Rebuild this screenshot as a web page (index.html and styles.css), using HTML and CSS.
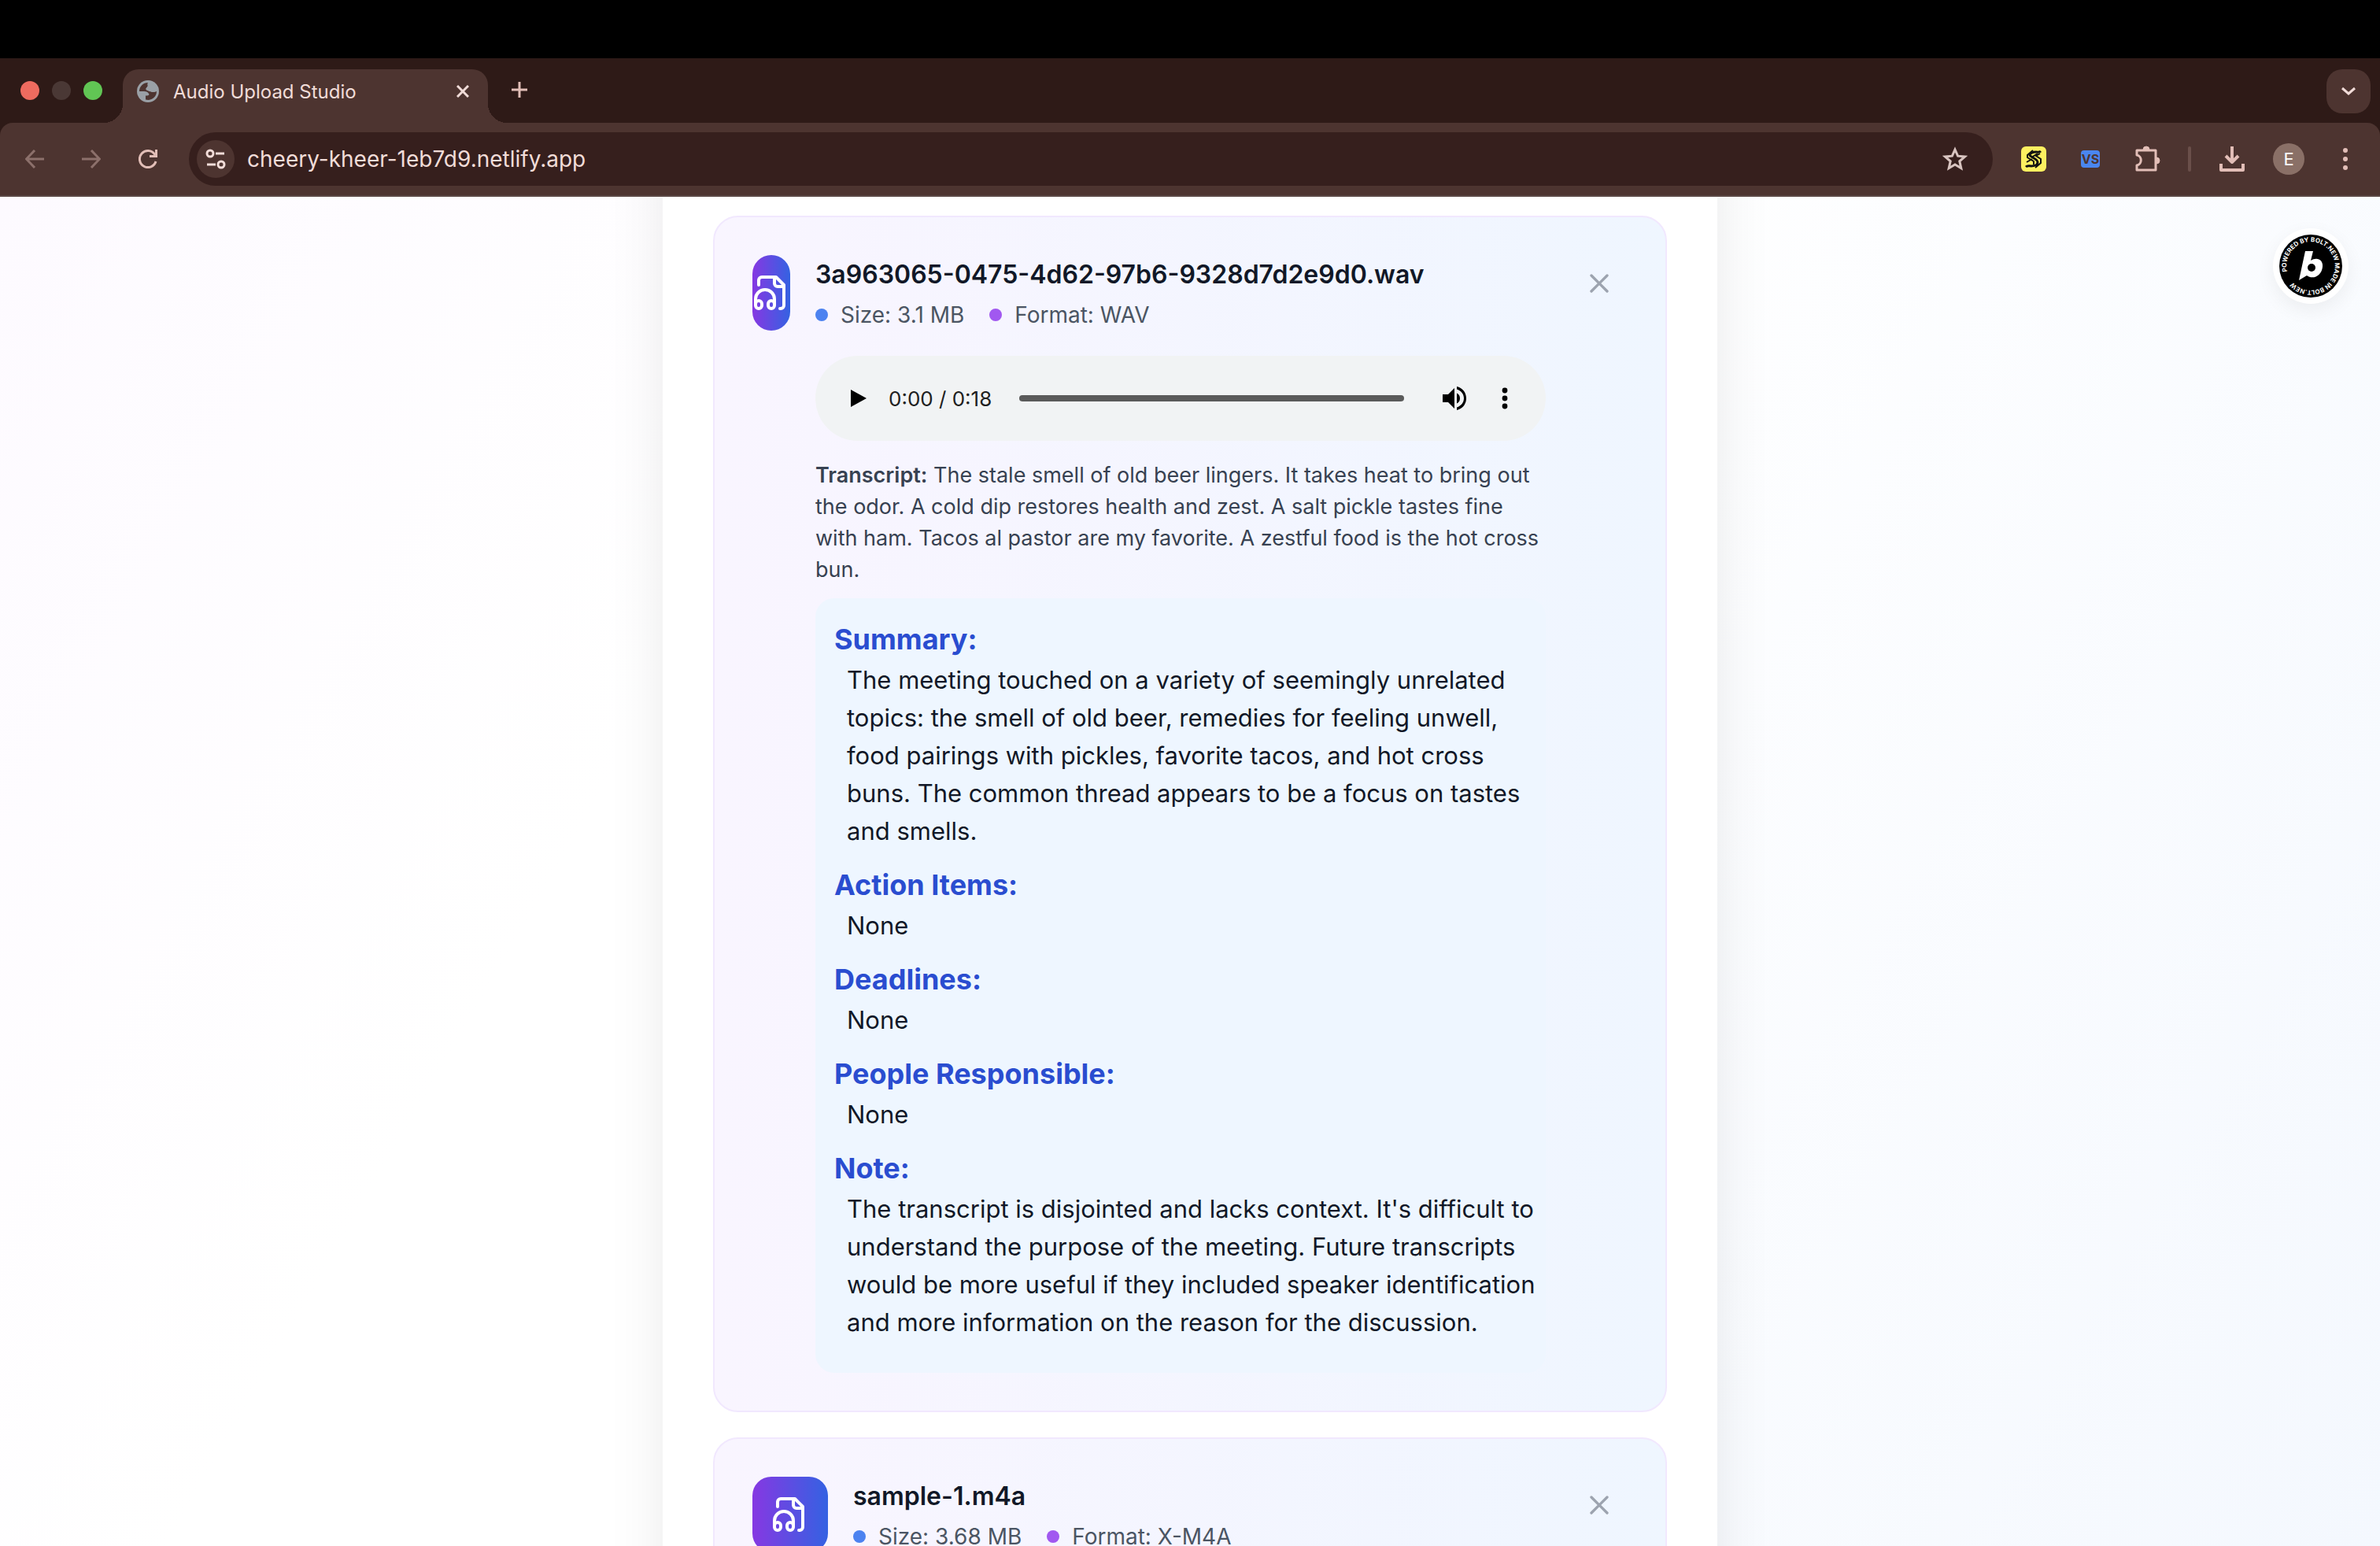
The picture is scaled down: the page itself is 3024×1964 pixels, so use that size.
FILE: index.html
```html
<!DOCTYPE html>
<html lang="en">
<head>
  <meta charset="UTF-8" />
  <meta name="viewport" content="width=device-width, initial-scale=1" />
  <title>Audio Upload Studio</title>
  <link rel="stylesheet" href="styles.css">
</head>
<body>

  <div class="menu-bar"></div>

  <header class="browser">
    <div class="tab-strip">
      <div class="lights">
        <span class="light red"></span>
        <span class="light grey"></span>
        <span class="light green"></span>
      </div>
      <div class="tab">
        <svg class="favicon" viewBox="0 0 28 28"><circle cx="14" cy="14" r="14" fill="#9aa0a6"/><path d="M14 3A11 11 0 0 0 3 14h6c3 0 5 1 6 3 1 1.500 0 2.500-2 2.500h-2V24.600A11 11 0 0 0 25 14c-2 1-4 1.500-5.500.5-1.500-1-3.500.5-5-1-1.500-1.200-3-.5-3-2.500 0-1.500 1.500-2 2-3.500S12.500 5 14 3z" fill="#4d3430"/><path d="M14.500 3.500c-1.500 2 .5 2.500-.5 4s-2.500 2-2.500 3.500 1.500 1.500 3 1.500c2.500 0 2.500 2.500 5 2.500 2 0 4-1 5.500-2L22 6z" fill="#9aa0a6"/></svg>
        <span class="tab-title">Audio Upload Studio</span>
        <button class="icon-button tab-close" aria-label="Close tab"><svg viewBox="0 0 16 16" width="16" height="16"><path d="M1 1l14 14M15 1L1 15" stroke="#f1dcd8" stroke-width="3" fill="none"/></svg></button>
      </div>
      <button class="icon-button new-tab" aria-label="New tab"><svg viewBox="0 0 20 20" width="20" height="20"><path d="M10 0v20M0 10h20" stroke="#e2beb7" stroke-width="3"/></svg></button>
      <button class="icon-button tab-search" aria-label="Search tabs"><svg viewBox="0 0 18 12" width="18" height="12"><path d="M1 2l8 7 8-7" stroke="#f1dcd8" stroke-width="3" fill="none"/></svg></button>
    </div>

    <div class="toolbar">
      <button class="icon-button nav" aria-label="Back"><svg viewBox="0 0 24 24" width="24" height="24"><path d="M24 12H2M12 1L1.500 12 12 23" stroke="#8c706b" stroke-width="3" fill="none"/></svg></button>
      <button class="icon-button nav" aria-label="Forward"><svg viewBox="0 0 24 24" width="24" height="24"><path d="M0 12h22M12 1l10.500 11L12 23" stroke="#8c706b" stroke-width="3" fill="none"/></svg></button>
      <button class="icon-button nav" aria-label="Reload"><svg viewBox="0 0 24 24" width="24" height="24"><path d="M22 15a10.500 10.500 0 1 1-1.500-9L23 9" stroke="#e2beb7" stroke-width="3" fill="none"/><path d="M24 0v10H14V7h7V0z" fill="#e2beb7"/></svg></button>
      <div class="omnibox">
        <button class="icon-button site-info" aria-label="View site information"><svg viewBox="0 0 26 26" width="26" height="26" fill="none" stroke="#f1dcd8" stroke-width="3"><circle cx="6" cy="6" r="4"/><path d="M13 6h11M2 20h11"/><circle cx="20" cy="20" r="4"/></svg></button>
        <input class="address" type="text" value="cheery-kheer-1eb7d9.netlify.app" aria-label="Address" />
        <button class="icon-button" aria-label="Bookmark this tab"><svg viewBox="0 0 32 32" width="32" height="32"><path d="M16 4l3.600 8.200 8.900.8-6.700 5.900 2 8.800L16 23l-7.800 4.700 2-8.800-6.700-5.900 8.900-.8z" fill="none" stroke="#d8c4c0" stroke-width="3"/></svg></button>
      </div>
      <div class="extensions">
        <button class="icon-button slot" aria-label="Scribe"><svg viewBox="0 0 32 32" width="32" height="32"><rect width="32" height="32" rx="6" fill="#fdf060"/><path d="M25 6c-2 2-4 1-6 1-4 0-8 2-8 4s10 5 10 9-5 5-8 5-5-1-7 1" fill="none" stroke="#111" stroke-width="3"/><path d="M15 5l-7 6v3l8 5v4M24 9l-5 3 6 4v5l-7 6" fill="none" stroke="#111" stroke-width="2"/><path d="M7 20l7-4M13 14l8-5" stroke="#111" stroke-width="2"/></svg></button>
        <button class="icon-button slot" aria-label="VS"><span class="vs">VS</span></button>
        <button class="icon-button slot" aria-label="Extensions"><svg viewBox="0 0 34 34" width="34" height="34"><path d="M4 6h24v25H4v-6c7-1 7-12 0-13z" fill="none" stroke="#e2beb7" stroke-width="3" stroke-linejoin="round"/><path d="M12 5a4 4 0 0 1 8 0zM29 15a4 4 0 0 1 0 8z" fill="#e2beb7" stroke="#e2beb7"/></svg></button>
      </div>
      <span class="divider"></span>
      <button class="icon-button download" aria-label="Downloads"><svg viewBox="0 0 32 32" width="32" height="32"><path d="M16 0v20M8 12l8 8 8-8M2 22v8h28v-8" fill="none" stroke="#e2beb7" stroke-width="4" stroke-linejoin="round"/></svg></button>
      <button class="icon-button avatar" aria-label="Profile">E</button>
      <button class="icon-button kebab" aria-label="Menu"><svg viewBox="0 0 6 28" width="6" height="28" fill="#e2beb7"><circle cx="3" cy="3" r="3"/><circle cx="3" cy="14" r="3"/><circle cx="3" cy="25" r="3"/></svg></button>
    </div>
  </header>

  <main class="page">
    <section class="panel">

      <article class="card">
        <div class="file-icon narrow">
          <svg viewBox="0 0 24 24" width="48" height="48"><path d="M17.500 22h.5a2 2 0 0 0 2-2V7l-5-5H6a2 2 0 0 0-2 2v3"/><path d="M14 2v4a2 2 0 0 0 2 2h4"/><path d="M2 19a2 2 0 1 1 4 0v1a2 2 0 1 1-4 0v-4a6 6 0 0 1 12 0v4a2 2 0 1 1-4 0v-1a2 2 0 1 1 4 0"/></svg>
        </div>
        <div class="file-body">
          <h3 class="file-name">3a963065-0475-4d62-97b6-9328d7d2e9d0.wav</h3>
          <div class="meta">
            <span class="dot blue"></span><span class="meta-text">Size: 3.1 MB</span>
            <span class="dot purple"></span><span class="meta-text">Format: WAV</span>
          </div>
          <div class="player">
            <button class="icon-button play" aria-label="Play"><svg viewBox="0 0 20 22" width="20" height="22"><path d="M0 0l20 11L0 22z"/></svg></button>
            <span class="time">0:00 / 0:18</span>
            <input class="seek" type="range" min="0" max="18" value="0" aria-label="Seek" />
            <button class="icon-button volume" aria-label="Mute"><svg viewBox="0 0 30 30" width="30" height="30"><path d="M0 10v10h7l8 8V2l-8 8zM18 8.500v13c2.500-1 4-3.500 4-6.500s-1.500-5.500-4-6.500z"/><path d="M18 0v3.500c5 1.500 9 6 9 11.500s-4 10-9 11.500V30c7-1.500 12-7.500 12-15S25 1.500 18 0z"/></svg></button>
            <button class="icon-button more" aria-label="More options"><svg viewBox="0 0 8 28" width="8" height="28"><circle cx="4" cy="4" r="3.400"/><circle cx="4" cy="14" r="3.400"/><circle cx="4" cy="24" r="3.400"/></svg></button>
          </div>
          <p class="transcript"><strong>Transcript:</strong> The stale smell of old beer lingers. It takes heat to bring out<br>the odor. A cold dip restores health and zest. A salt pickle tastes fine<br>with ham. Tacos al pastor are my favorite. A zestful food is the hot cross<br>bun.</p>
          <div class="notes">
            <h4>Summary:</h4>
            <p>The meeting touched on a variety of seemingly unrelated<br>topics: the smell of old beer, remedies for feeling unwell,<br>food pairings with pickles, favorite tacos, and hot cross<br>buns. The common thread appears to be a focus on tastes<br>and smells.</p>
            <h4>Action Items:</h4>
            <p>None</p>
            <h4>Deadlines:</h4>
            <p>None</p>
            <h4>People Responsible:</h4>
            <p>None</p>
            <h4>Note:</h4>
            <p>The transcript is disjointed and lacks context. It's difficult to<br>understand the purpose of the meeting. Future transcripts<br>would be more useful if they included speaker identification<br>and more information on the reason for the discussion.</p>
          </div>
        </div>
        <button class="icon-button remove" aria-label="Remove file"><svg viewBox="0 0 24 24" width="40" height="40"><path d="M18 6L6 18M6 6l12 12"/></svg></button>
      </article>

      <article class="card">
        <div class="file-icon">
          <svg viewBox="0 0 24 24" width="48" height="48"><path d="M17.500 22h.5a2 2 0 0 0 2-2V7l-5-5H6a2 2 0 0 0-2 2v3"/><path d="M14 2v4a2 2 0 0 0 2 2h4"/><path d="M2 19a2 2 0 1 1 4 0v1a2 2 0 1 1-4 0v-4a6 6 0 0 1 12 0v4a2 2 0 1 1-4 0v-1a2 2 0 1 1 4 0"/></svg>
        </div>
        <div class="file-body">
          <h3 class="file-name">sample-1.m4a</h3>
          <div class="meta">
            <span class="dot blue"></span><span class="meta-text">Size: 3.68 MB</span>
            <span class="dot purple"></span><span class="meta-text">Format: X-M4A</span>
          </div>
        </div>
        <button class="icon-button remove" aria-label="Remove file"><svg viewBox="0 0 24 24" width="40" height="40"><path d="M18 6L6 18M6 6l12 12"/></svg></button>
      </article>

    </section>

    <a class="bolt-badge" href="#" aria-label="Powered by Bolt.new">
      <svg viewBox="0 0 80 80" width="80" height="80">
        <defs><path id="ring" d="M10 47a30.800 30.800 0 1 1 60-14a30.800 30.800 0 1 1-60 14"/></defs>
        <circle cx="40" cy="40" r="40" fill="#000"/>
        <text class="ring-text"><textPath href="#ring">POWERED BY BOLT.NEW MADE IN BOLT.NEW</textPath></text>
        <path d="M33 21h10l-3 12c8-5 16-1 15 8-1 11-12 17-20 11l-10 6z" fill="#fff"/>
        <circle cx="41" cy="42" r="5" fill="#000"/>
      </svg>
    </a>
  </main>

</body>
</html>
```
FILE: styles.css
```css
* {
  box-sizing: border-box;
}

body {
  margin: 0;
  height: 100vh;
  display: flex;
  flex-direction: column;
  overflow: hidden;
  font-family: Inter, "Liberation Sans", sans-serif;
  color: #111827;
}

.menu-bar {
  height: 74px;
  flex-shrink: 0;
  background: #000;
}

.icon-button {
  display: flex;
  align-items: center;
  justify-content: center;
  padding: 0;
  border: none;
  background: transparent;
  font-family: inherit;
  cursor: pointer;
}

/* browser window */

.browser {
  flex-shrink: 0;
  background: #2e1a17;
}

.tab-strip {
  display: flex;
  height: 82px;
  padding: 14px 12px 0 26px;
}

.lights {
  display: flex;
  gap: 16px;
  width: 130px;
  padding-top: 15px;
}

.light {
  width: 24px;
  height: 24px;
  border-radius: 50%;
}

.red { background: #ed6b5f; }
.grey { background: #4a3835; }
.green { background: #61c554; }

.tab {
  position: relative;
  display: flex;
  align-items: center;
  width: 464px;
  padding: 0 24px 12px 18px;
  background: #4d3430;
  border-radius: 20px 20px 0 0;
}

/* flared feet of the active tab */
.tab::before,
.tab::after {
  content: "";
  position: absolute;
  bottom: 0;
  width: 24px;
  height: 24px;
}

.tab::before {
  right: 100%;
  background: radial-gradient(circle at 0 0, transparent 24px, #4d3430 24px);
}

.tab::after {
  left: 100%;
  background: radial-gradient(circle at 100% 0, transparent 24px, #4d3430 24px);
}

.favicon {
  width: 28px;
  height: 28px;
}

.tab-title {
  flex: 1;
  margin-left: 18px;
  color: #f1dcd8;
  font-size: 24px;
}

.new-tab {
  width: 80px;
  height: 52px;
}

.tab-search {
  width: 56px;
  height: 56px;
  margin-left: auto;
  border-radius: 20px;
  background: #4d3430;
}

.toolbar {
  display: flex;
  align-items: center;
  height: 94px;
  padding: 0 24px 0 8px;
  border-bottom: 2px solid #5b4845;
  border-radius: 16px 16px 0 0;
  background: #4d3430;
}

.nav {
  width: 72px;
  height: 72px;
}

.omnibox {
  display: flex;
  align-items: center;
  flex: 1;
  height: 68px;
  margin-left: 16px;
  padding: 0 32px 0 10px;
  border-radius: 34px;
  background: #361f1d;
}

.site-info {
  width: 48px;
  height: 48px;
  border-radius: 50%;
  background: #4d3430;
}

.address {
  flex: 1;
  margin-left: 16px;
  padding: 0;
  border: none;
  outline: none;
  background: transparent;
  color: #f1dcd8;
  font-family: inherit;
  font-size: 28px;
}

.extensions {
  display: flex;
  margin-left: 16px;
}

.slot {
  width: 72px;
  height: 72px;
}

.vs {
  width: 24px;
  border-radius: 4px;
  background: #4a86f0;
  color: #4d3430;
  font-size: 16px;
  font-weight: 700;
  line-height: 22px;
}

.divider {
  width: 4px;
  height: 32px;
  margin-left: 16px;
  border-radius: 2px;
  background: #6a4f4a;
}

.download {
  width: 72px;
  margin-left: 16px;
}

.avatar {
  width: 40px;
  height: 40px;
  margin-left: 16px;
  border-radius: 50%;
  background: #8a7067;
  color: #fff;
  font-size: 22px;
}

.kebab {
  width: 40px;
  margin-left: 32px;
}

/* page */

.page {
  position: relative;
  flex: 1;
  min-height: 0;
  overflow: hidden;
  background: linear-gradient(120deg, #fdfaff 0%, #fff 30%, #fff 50%, #f4f8fe 100%);
}

/* the page is scrolled, so the panel starts above the fold */
.panel {
  display: flex;
  flex-direction: column;
  gap: 32px;
  max-width: 1340px;
  margin: -200px auto 0;
  padding: 224px 64px 200px;
  background: #fff;
  box-shadow: 0 0 80px -16px rgba(0, 0, 0, 0.12);
}

.card {
  display: flex;
  align-items: flex-start;
  padding: 48px;
  border: 2px solid #f1e8fe;
  border-radius: 32px;
  background: linear-gradient(90deg, #f9f5ff, #eff6ff);
}

.file-icon {
  display: flex;
  align-items: center;
  justify-content: center;
  flex-shrink: 0;
  width: 96px;
  height: 96px;
  border-radius: 24px;
  background: linear-gradient(90deg, #8638e2, #3462e2);
}

.file-icon.narrow {
  width: 48px;
}

.file-icon svg,
.remove svg {
  flex-shrink: 0;
  fill: none;
  stroke: #fff;
  stroke-width: 2;
  stroke-linecap: round;
  stroke-linejoin: round;
}

.file-body {
  flex: 1;
  min-width: 0;
  margin: 0 32px;
}

.file-name {
  margin: 0 0 6px;
  font-size: 32px;
  font-weight: 600;
  line-height: 50px;
}

.meta {
  display: flex;
  align-items: center;
  color: #4b5563;
  font-size: 28px;
  line-height: 40px;
}

.meta-text {
  margin: 0 32px 0 16px;
}

.dot {
  width: 16px;
  height: 16px;
  border-radius: 50%;
}

.dot.blue { background: #4c82f0; }
.dot.purple { background: #a158f0; }

.player {
  display: flex;
  align-items: center;
  height: 108px;
  margin-top: 32px;
  padding: 0 20px;
  border-radius: 54px;
  background: #f1f3f4;
}

.play {
  width: 70px;
  height: 64px;
}

.time {
  width: 134px;
  margin-left: 3px;
  color: #202020;
  font-size: 26px;
  white-space: nowrap;
}

.seek {
  flex: 1;
  height: 8px;
  margin: 0 32px;
  border-radius: 4px;
  background: #5a5a5a;
  appearance: none;
}

.seek::-webkit-slider-thumb {
  appearance: none;
  width: 0;
  height: 0;
}

.volume,
.more {
  width: 64px;
  height: 64px;
}

.transcript {
  margin: 24px 0 16px;
  color: #374151;
  font-size: 27px;
  line-height: 40px;
  white-space: nowrap;
}

.transcript strong {
  font-weight: 600;
}

.notes {
  padding: 24px;
  border-radius: 24px;
  background: #eef6ff;
  white-space: nowrap;
}

.notes h4 {
  margin: 0;
  color: #2a4dd0;
  font-size: 36px;
  font-weight: 700;
  line-height: 56px;
}

.notes p {
  margin: 0 0 16px;
  padding-left: 16px;
  font-size: 31px;
  line-height: 48px;
}

.remove {
  width: 72px;
  height: 72px;
}

.remove svg {
  stroke: #9ca3af;
}

.bolt-badge {
  position: absolute;
  top: 40px;
  right: 40px;
  display: flex;
  align-items: center;
  justify-content: center;
  width: 96px;
  height: 96px;
  border-radius: 50%;
  background: #fff;
  box-shadow: 0 8px 24px rgba(0, 0, 0, 0.06);
}

.ring-text {
  fill: #fff;
  font-size: 8px;
  font-weight: 700;
}
```
